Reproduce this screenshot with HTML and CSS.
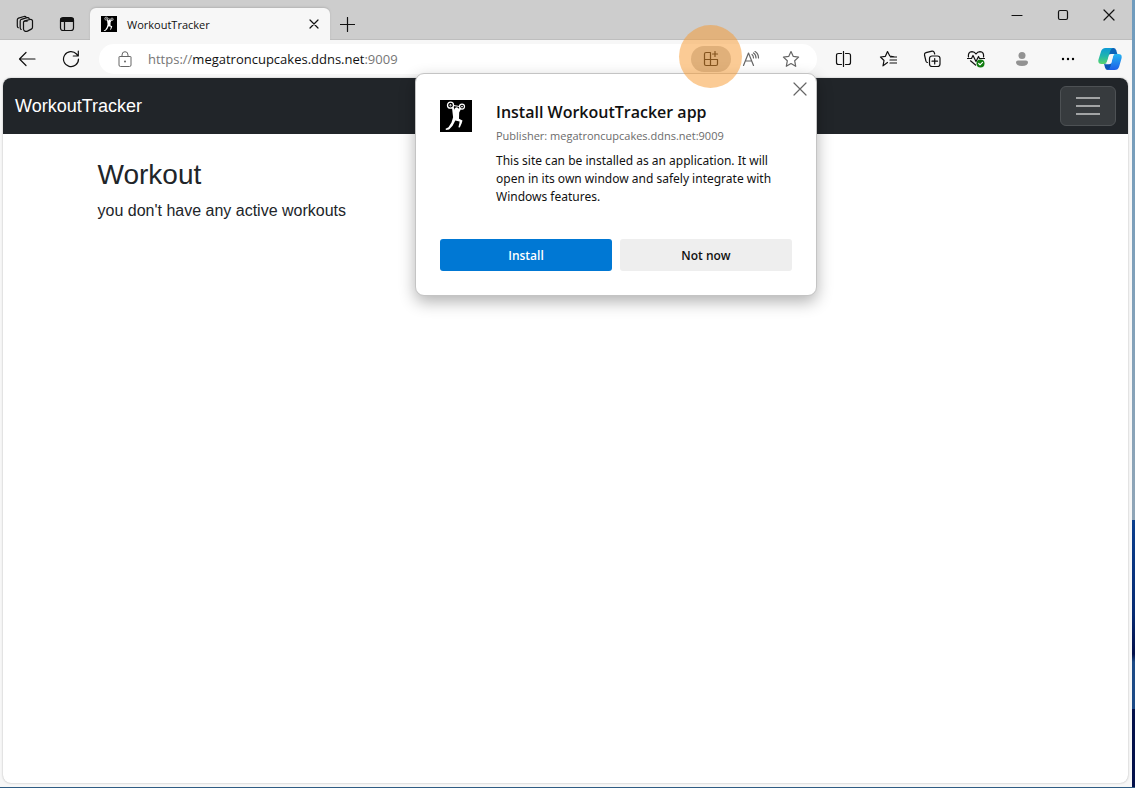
FILE: index.html
```html
<!DOCTYPE html>
<html lang="en">
<head>
<meta charset="utf-8">
<meta name="viewport" content="width=device-width, initial-scale=1">
<title>WorkoutTracker</title>
<link rel="stylesheet" href="styles.css">
</head>
<body class="desktop">
<svg class="defs" aria-hidden="true">
  <symbol id="lifter" viewBox="0 0 32 32">
    <path fill="#000" d="M0 0h32v32H0z"/>
    <g fill="none" stroke="#fff">
      <circle cx="10.5" cy="5.2" r="3" stroke-width="1.3"/><circle cx="10.5" cy="5.2" r=".7"/>
      <circle cx="22" cy="6.6" r="2.5" stroke-width="1.2"/><circle cx="22" cy="6.6" r=".5"/>
      <path d="M13.5 5.500 19.500 6.500" stroke-width="1"/>
    </g>
    <path fill="#fff" d="M12 7.500 13.500 7l1.600 3.600 1 .6a2 2 0 1 1 2.600-2.400l1.600-1.300 1.200.6-2.300 4.500-.2 6.200 3.500 1.600-.9 3.200-1.800 4-1.400-.3 1-4.200.2-1.700-4.300-.9-2.700 5.300-3.500 3.700-3.200.5-.3-1.200 2.900-1.500 3-4.800 1.600-5.300-.6-5z"/>
  </symbol>
</svg>
<div class="window">
  <header class="tabstrip">
    <button class="strip-btn" aria-label="Workspaces">
      <svg width="18" height="18" viewBox="0 0 18 18" class="line"><path d="M7.500 7 8.500 5.800 14 4.500q2-.4 2.500 1.200v6.500q0 1.300-1.200 1.900l-3.800 2q-1.400.5-2.700 0-1.300-.5-1.300-2zM7.500 7q.3-.8 1.600-.8h2"/><path d="M5.200 14.500q-1-.4-1-1.800V6q0-1.200 1.200-1.700l5.600-1.600q1.700-.3 2.300 1"/><path d="M2.300 12.700q-1-.4-1-1.800V4.800q0-1.200 1.200-1.700L8 1.500q1.500-.4 2.200.8"/></svg>
    </button>
    <button class="strip-btn" aria-label="Tab actions">
      <svg width="16" height="16" viewBox="0 0 16 16" class="line"><rect x="1.500" y="1.500" width="13" height="13" rx="2.500"/><path d="M2 2.500h12v3H2z" fill="#111"/><path d="M5.500 5v9.500"/></svg>
    </button>
    <div class="tab">
      <svg class="tab-icon" width="16" height="16"><use href="#lifter"/></svg>
      <span class="tab-title">WorkoutTracker</span>
      <button class="tab-close" aria-label="Close tab"><svg width="10" height="10" viewBox="0 0 10 10" class="line"><path d="m1 1 8 8M9 1 1 9"/></svg></button>
    </div>
    <button class="new-tab" aria-label="New tab"><svg width="15" height="15" viewBox="0 0 15 15" class="line"><path d="M7.500.5v14M.5 7.500h14"/></svg></button>
    <div class="win-controls">
      <button aria-label="Minimize"><svg width="12" height="12" viewBox="0 0 12 12" class="line"><path d="M1 6.500h10"/></svg></button>
      <button aria-label="Maximize"><svg width="12" height="12" viewBox="0 0 12 12" class="line"><rect x="1.500" y="1.500" width="9" height="9" rx="1.500"/></svg></button>
      <button aria-label="Close"><svg width="12" height="12" viewBox="0 0 12 12" class="line"><path d="m1 1 10 10M11 1 1 11"/></svg></button>
    </div>
  </header>

  <div class="toolbar">
    <button class="tool" aria-label="Back"><svg width="18" height="16" viewBox="0 0 18 16" class="line"><path d="M17 8H1.500M8 1.500 1.500 8 8 14.500"/></svg></button>
    <button class="tool" aria-label="Refresh"><svg width="18" height="18" viewBox="0 0 18 18" class="line"><path d="M16.500 9A7.500 7.500 0 1 1 14.500 4l1.500 1.800M16.300 1v5h-5"/></svg></button>
    <div class="address">
      <svg class="lock" width="14" height="16" viewBox="0 0 14 16"><path d="M1.500 5.500h11q.5 0 .5.500v8q0 1.500-1.500 1.500h-9Q1 15.500 1 14V6q0-.5.5-.5zM4 5.500V4q0-3.300 3-3.300T10 4v1.500" fill="none" stroke="#666"/><circle cx="7" cy="10.500" r="1" fill="#666"/></svg>
      <div class="url"><span class="muted">https://</span>megatroncupcakes.ddns.net<span class="muted">:9009</span></div>
      <button class="install-pill" aria-label="App available">
        <svg width="16" height="16" viewBox="0 0 16 16" class="line"><path d="M7 1.500H3Q1.500 1.500 1.500 3v10q0 1.500 1.500 1.500h10q1.500 0 1.500-1.500V8.500h-13M7.500 1.500v13M12 .500v5M9.500 3h5"/></svg>
        <span class="click-mark"></span>
      </button>
      <button class="addr-btn" aria-label="Read aloud"><svg width="18" height="16" viewBox="0 0 18 16" class="line soft"><path d="M1.500 14.500 6.500 2l5 12.500M3.300 10h6.400M10 3.500q1.500 1.200 1.500 3.500M11.500 2q2.500 1.500 2.500 5M13 .5q3.500 2 3.500 6.500"/></svg></button>
      <button class="addr-btn" aria-label="Add to favorites"><svg width="18" height="18" viewBox="0 0 18 18" class="line soft"><path d="m9 1.500 2.300 4.900 5.300.7-3.900 3.700 1 5.500L9 13.600l-4.700 2.700 1-5.500-3.900-3.700 5.300-.7z"/></svg></button>

      <section class="popup" role="dialog" aria-labelledby="install-title">
        <button class="popup-close" aria-label="Dismiss"><svg width="14" height="14" viewBox="0 0 14 14" class="line soft"><path d="m1 1 12 12M13 1 1 13"/></svg></button>
        <div class="popup-body">
          <svg class="popup-icon" width="32" height="32"><use href="#lifter"/></svg>
          <div class="popup-copy">
            <h2 class="popup-title" id="install-title">Install WorkoutTracker app</h2>
            <p class="publisher">Publisher: megatroncupcakes.ddns.net:9009</p>
            <p class="description">This site can be installed as an application. It will open in its own window and safely integrate with Windows features.</p>
          </div>
        </div>
        <div class="popup-actions">
          <button class="btn primary">Install</button>
          <button class="btn">Not now</button>
        </div>
      </section>
    </div>
    <div class="tools">
      <button class="tool" aria-label="Split screen"><svg width="18" height="16" viewBox="0 0 18 16" class="line"><path d="M8.500.5v15M6.500 2.500H3.500Q1.500 2.500 1.500 4.500v7q0 2 2 2h3M10.500 2.500h3q2 0 2 2v7q0 2-2 2h-3"/></svg></button>
      <button class="tool" aria-label="Favorites"><svg width="18" height="18" viewBox="0 0 18 18" class="line"><path d="M8.500 12.500 4 15.800l1-5.300L1.500 7l4.900-.7 2.100-4.800 2.300 4.500 4.200.8M11.500 7h6M11 10h6.500M11 13h6.500"/></svg></button>
      <button class="tool" aria-label="Collections"><svg width="18" height="18" viewBox="0 0 18 18" class="line"><rect x="6.500" y="6" width="10.500" height="10.500" rx="2.500"/><path d="M11.700 8.500v5.500M9 11.200h5.500M4.500 12.500q-1.300 0-1.600-1.500L1.500 5Q1.200 3.200 3 2.700l6-1.600q1.800-.3 2.300 1.500l.4 1.400"/></svg></button>
      <button class="tool" aria-label="Browser essentials"><svg width="18" height="18" viewBox="0 0 18 18" class="line"><path d="M1.500 7Q.8 2 5 1.700q2.500 0 4 2.300 1.500-2.300 4-2.300Q17.200 2 16.500 7M.5 8.500h4l1.500-3 3 6 2.500-5 1 2h5M3.500 10.800 8.500 15"/><circle cx="13.500" cy="13.500" r="4" fill="#107c10" stroke="none"/><path d="m11.700 13.500 1.300 1.300 2.500-2.500" stroke="#fff"/></svg></button>
      <button class="tool wide profile" aria-label="Profile"><svg width="14" height="16" viewBox="0 0 14 16"><circle cx="7" cy="4.500" r="3.500" fill="#929292"/><path d="M3 9.500h8q2 0 2 1.800 0 3.700-6 3.700t-6-3.700q0-1.800 2-1.800z" fill="#929292"/></svg></button>
      <button class="tool wide" aria-label="Settings and more"><svg width="14" height="4" viewBox="0 0 14 4"><circle cx="2" cy="2" r="1.200"/><circle cx="7" cy="2" r="1.200"/><circle cx="12" cy="2" r="1.200"/></svg></button>
      <button class="tool copilot" aria-label="Copilot">
        <svg width="24" height="24" viewBox="0 0 24 24">
          <defs>
            <linearGradient id="cp-a" x1="0" y1="0" x2="0" y2="1"><stop offset="0" stop-color="#0c9ad6"/><stop offset=".5" stop-color="#20b5ad"/><stop offset="1" stop-color="#58d56c"/></linearGradient>
            <linearGradient id="cp-b" x1="0" y1="0" x2="0" y2="1"><stop offset="0" stop-color="#26b4f1"/><stop offset="1" stop-color="#1c5ee8"/></linearGradient>
          </defs>
          <path fill="#0b56b5" d="M6 16.500h8l-1.500 5q-.8 1.500-2.500 1.500-2.500 0-3-2.500z"/>
          <path fill="#0b62b8" d="M11 1h4.500q2 0 2.700 2.200L19.500 7.500H11z"/>
          <path fill="url(#cp-a)" d="M7.500 1H15q-2 .5-2.800 3L9.500 13q-1 4-3.500 4H3.500q-4 0-3-4.500L3 4.500Q4 1 7.500 1z"/>
          <path fill="url(#cp-b)" d="M16.500 7h4q4 0 3 4.500l-2.300 8q-1 3.500-4.700 3.500H9.500q2-.5 2.800-3l2.500-9.500Q15.300 7.700 16.500 7z"/>
          <path fill="#f7f7f7" d="M11.200 8.500Q11.600 7 13 7h3.500q-1.200.5-1.700 2.500l-1.700 6.300q-.4 1.400-1.800 1.400H7q1.800-.6 2.400-2.500z"/>
        </svg>
      </button>
    </div>
  </div>

  <div class="page">
    <nav class="navbar">
      <a class="brand" href="#">WorkoutTracker</a>
      <button class="toggler" aria-label="Toggle navigation"><svg width="30" height="30" viewBox="0 0 30 30"><path d="M3 7h24M3 15h24M3 23h24" stroke="#a2a4a5" stroke-width="2"/></svg></button>
    </nav>
    <main class="container">
      <h1 class="heading">Workout</h1>
      <p class="message">you don't have any active workouts</p>
    </main>
  </div>
</div>
</body>
</html>
```
FILE: styles.css
```css
*, *::before, *::after { box-sizing: border-box; }
h1, h2, p { margin: 0; }
button { font: inherit; color: inherit; border: 0; padding: 0; background: none; display: flex; align-items: center; justify-content: center; }
svg { display: block; flex: none; }
.defs { position: absolute; width: 0; height: 0; }
.line { fill: none; stroke: #111; stroke-width: 1.2; stroke-linecap: round; stroke-linejoin: round; }
.soft { stroke: #666; }

.desktop {
  margin: 0;
  min-height: 100vh;
  display: flex;
  padding-right: 3px;
  border-bottom: 1px solid #2f5c83;
  background: linear-gradient(#6f9bbd 0, #8fa5b7 66%, #0b3f8e 66%, #062a72 78%, #03104a 83%, #1c4a86 84%, #1c4a86 90%, #03104a 90%);
  font-family: "Open Sans", "Noto Sans", sans-serif;
  font-size: 12px;
  color: #111;
}
.window { flex: 1; min-width: 0; display: flex; flex-direction: column; background: #f7f7f7; }

.tabstrip { display: flex; align-items: flex-end; height: 40px; padding-left: 4px; background: #cdcdcd; box-shadow: inset 0 -1px #bebebe; }
.strip-btn { width: 42px; height: 32px; }
.tab { display: flex; align-items: center; width: 240px; height: 32px; margin-left: 2px; padding: 0 8px 0 11px; gap: 10px; background: #f7f7f7; border-radius: 6px 6px 0 0; box-shadow: 0 -1px 2px #b4b4b4; clip-path: inset(-3px -3px 0 -3px); }
.tab-title { flex: 1; font-size: 11px; }
.tab-close { width: 16px; height: 16px; }
.new-tab { width: 34px; height: 32px; }
.win-controls { display: flex; align-self: flex-start; margin-left: auto; }
.win-controls button { width: 46px; height: 30px; }

.toolbar { display: flex; align-items: center; height: 38px; padding: 0 3px 0 5px; }
.tool { width: 44px; height: 36px; }
.tool.wide { width: 46px; }
.tool.profile { margin-left: 1px; }
.tool.copilot { width: 38px; }
.tools { display: flex; margin-left: 5px; }
.address { position: relative; z-index: 2; flex: 1; min-width: 0; display: flex; align-items: center; height: 30px; margin-left: 6px; padding: 0 6px 0 19px; background: #fff; border-radius: 15px; }
.url { flex: 1; padding-left: 16px; font-size: 13px; white-space: nowrap; }
.muted { color: #767676; }
.install-pill { position: relative; width: 40px; height: 26px; border-radius: 13px; background: #c8c8c8; }
.click-mark { position: absolute; z-index: 3; top: -21px; left: -12px; width: 63px; height: 63px; border-radius: 50%; background: rgba(247, 151, 43, .5); pointer-events: none; }
.addr-btn { width: 40px; height: 26px; }

.popup { position: absolute; z-index: 2; top: 29px; right: 0; width: 402px; padding: 26px 24px 24px; background: #fff; border: 1px solid #c4c4c4; border-radius: 9px; box-shadow: 0 6px 16px rgba(0, 0, 0, .3); }
.popup-close { position: absolute; top: 6px; right: 7px; width: 18px; height: 18px; }
.popup-body { display: flex; gap: 24px; padding-right: 8px; }
.popup-copy { flex: 1; min-width: 0; }
.popup-title { font-size: 16px; line-height: 24px; font-weight: 600; }
.publisher { line-height: 24px; font-size: 11px; color: #6b6b6b; }
.description { font-family: "Noto Sans", sans-serif; line-height: 18px; padding-top: 4px; }
.popup-actions { display: flex; gap: 8px; margin-top: 33px; }
.btn { flex: 1; height: 32px; border-radius: 3px; background: #eee; font-weight: 600; }
.btn.primary { background: #0078d4; color: #fff; }

.page { flex: 1; display: flex; flex-direction: column; margin: 0 4px 4px 3px; background: #fff; border-radius: 8px; box-shadow: 0 0 2px #aaa; font-family: "Liberation Sans", Arial, sans-serif; font-size: 16px; color: #212529; }
.navbar { display: flex; align-items: center; justify-content: space-between; height: 56px; padding: 0 12px; background: #212529; border-radius: 8px 8px 0 0; }
.brand { color: #fff; font-size: 18px; text-decoration: none; }
.toggler { width: 56px; height: 40px; border: 1px solid #4d5154; border-radius: 6px; background: #373b3e; }
.container { width: 100%; max-width: 960px; margin: 0 auto; padding: 24px 12px; }
.heading { font-size: 28px; line-height: 34px; font-weight: 400; }
.message { margin-top: 7px; line-height: 24px; }
```
